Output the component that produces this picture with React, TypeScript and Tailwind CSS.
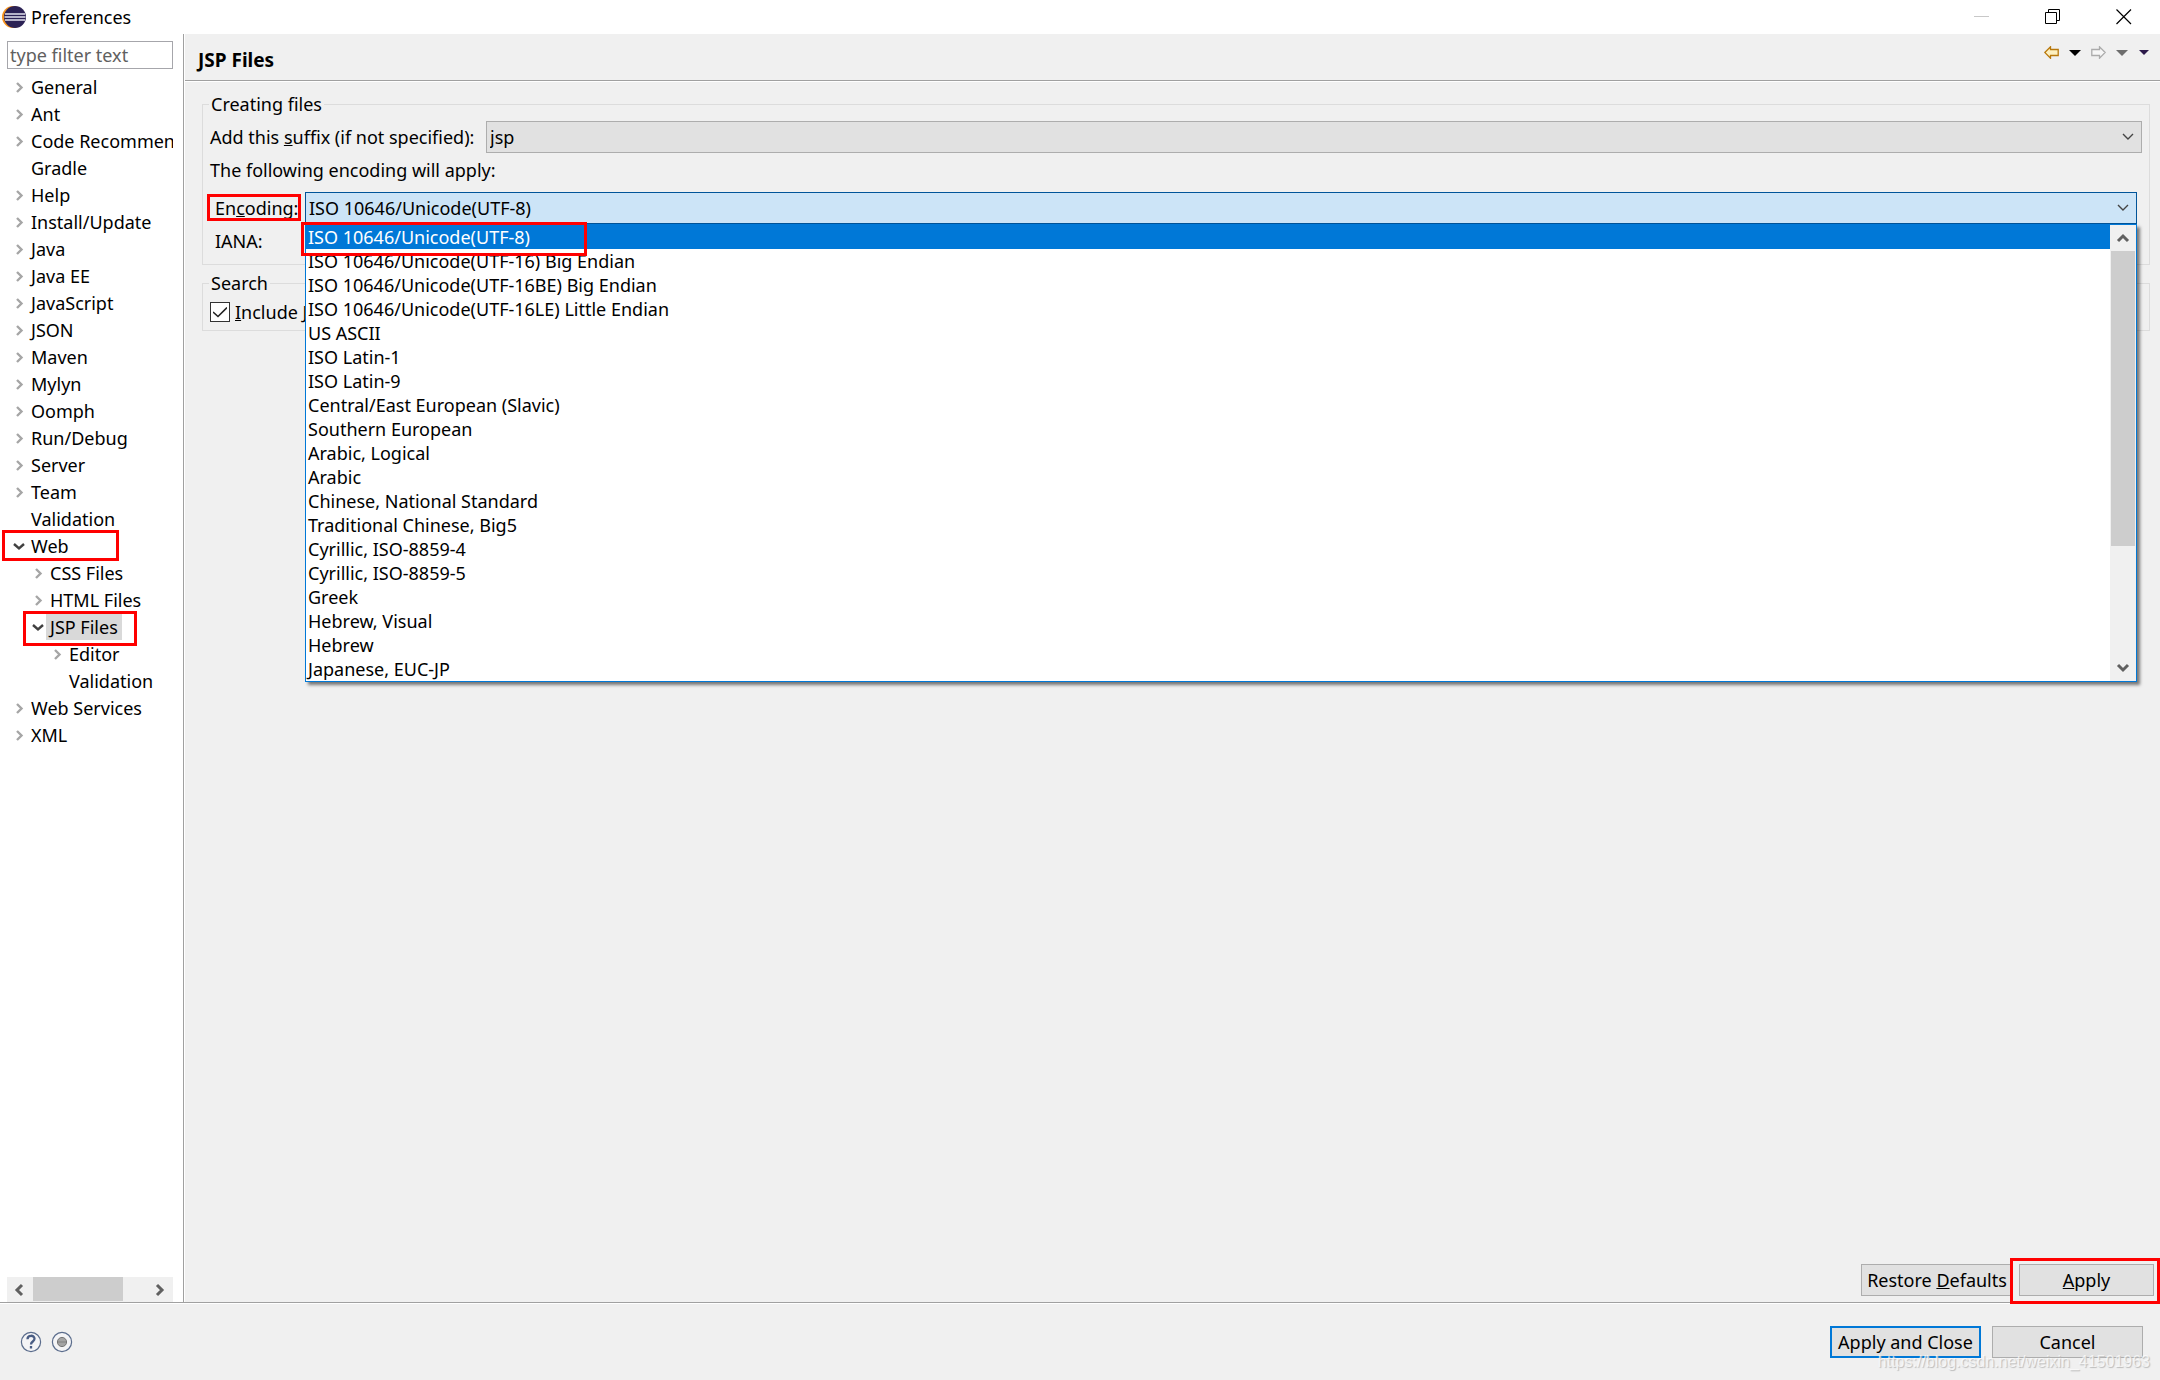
import React from 'react';

type TreeNode = { label: string; level: number; state?: 'open' | 'closed'; selected?: boolean; mark?: string };

const nodes: TreeNode[] = [
  { label: 'General', level: 0, state: 'closed' },
  { label: 'Ant', level: 0, state: 'closed' },
  { label: 'Code Recommenders', level: 0, state: 'closed' },
  { label: 'Gradle', level: 0 },
  { label: 'Help', level: 0, state: 'closed' },
  { label: 'Install/Update', level: 0, state: 'closed' },
  { label: 'Java', level: 0, state: 'closed' },
  { label: 'Java EE', level: 0, state: 'closed' },
  { label: 'JavaScript', level: 0, state: 'closed' },
  { label: 'JSON', level: 0, state: 'closed' },
  { label: 'Maven', level: 0, state: 'closed' },
  { label: 'Mylyn', level: 0, state: 'closed' },
  { label: 'Oomph', level: 0, state: 'closed' },
  { label: 'Run/Debug', level: 0, state: 'closed' },
  { label: 'Server', level: 0, state: 'closed' },
  { label: 'Team', level: 0, state: 'closed' },
  { label: 'Validation', level: 0 },
  { label: 'Web', level: 0, state: 'open', mark: 'left-[2px] -top-[2px] w-[117px] h-[31px]' },
  { label: 'CSS Files', level: 1, state: 'closed' },
  { label: 'HTML Files', level: 1, state: 'closed' },
  { label: 'JSP Files', level: 1, state: 'open', selected: true, mark: 'left-[23px] -top-[2px] w-[114px] h-[35px]' },
  { label: 'Editor', level: 2, state: 'closed' },
  { label: 'Validation', level: 2 },
  { label: 'Web Services', level: 0, state: 'closed' },
  { label: 'XML', level: 0, state: 'closed' },
];

const indents = ['pl-[12px]', 'pl-[31px]', 'pl-[50px]'];

const encodings = [
  'ISO 10646/Unicode(UTF-8)',
  'ISO 10646/Unicode(UTF-16) Big Endian',
  'ISO 10646/Unicode(UTF-16BE) Big Endian',
  'ISO 10646/Unicode(UTF-16LE) Little Endian',
  'US ASCII',
  'ISO Latin-1',
  'ISO Latin-9',
  'Central/East European (Slavic)',
  'Southern European',
  'Arabic, Logical',
  'Arabic',
  'Chinese, National Standard',
  'Traditional Chinese, Big5',
  'Cyrillic, ISO-8859-4',
  'Cyrillic, ISO-8859-5',
  'Greek',
  'Hebrew, Visual',
  'Hebrew',
  'Japanese, EUC-JP',
];

const Mark: React.FC<{ className: string }> = ({ className }) => (
  <span className={`absolute z-20 border-3 border-[#ff0000] pointer-events-none ${className}`} />
);

const Expander: React.FC<{ state?: 'open' | 'closed' }> = ({ state }) => (
  <svg className="w-[14px] h-[14px] shrink-0" viewBox="0 0 14 14" fill="none">
    {state === 'closed' && <path d="M5 3l4.500 4.500L5 12" stroke="#a6a6a6" strokeWidth="2.4" />}
    {state === 'open' && <path d="M2 5l5 4.500L12 5" stroke="#404040" strokeWidth="2.4" />}
  </svg>
);

const ComboArrow: React.FC = () => (
  <svg className="absolute right-[8px] top-[12px] w-[12px] h-[8px] pointer-events-none" viewBox="0 0 12 8" fill="none">
    <path d="M1 1l5 5 5-5" stroke="#444" strokeWidth="1.4" />
  </svg>
);

const ScrollArrow: React.FC<{ d: string }> = ({ d }) => (
  <svg className="w-[14px] h-[14px]" viewBox="0 0 14 14" fill="none">
    <path d={d} stroke="#606060" strokeWidth="3" />
  </svg>
);

const TitleBar: React.FC = () => (
  <header className="flex items-center h-[34px] bg-white pl-[2px] pr-[28px]">
    <svg className="w-[24px] h-[24px]" viewBox="0 0 24 24">
      <circle cx="11" cy="12" r="11" fill="#f7941e" />
      <circle cx="13" cy="12" r="11" fill="#2c2255" />
      <path d="M3 9h20M2.500 12h21M3 15h20" stroke="#e4e4f0" strokeWidth="1.6" />
    </svg>
    <h1 className="ml-[5px]">Preferences</h1>
    <div className="ml-auto flex items-center gap-[55px]">
      <button aria-label="Minimize">
        <svg className="w-[16px] h-[16px]" viewBox="0 0 16 16"><path d="M0 7.500h15" stroke="#c8c8c8" /></svg>
      </button>
      <button aria-label="Restore">
        <svg className="w-[16px] h-[16px]" viewBox="0 0 16 16" fill="none" stroke="#000">
          <path d="M.5 3.500h11v11H.5zM3.500 3.500v-3h11v11h-3" />
        </svg>
      </button>
      <button aria-label="Close">
        <svg className="w-[16px] h-[16px]" viewBox="0 0 16 16" fill="none"><path d="M.5.5l14.500 14.500M15 .5L.5 15" stroke="#000" strokeWidth="1.2" /></svg>
      </button>
    </div>
  </header>
);

const Sidebar: React.FC = () => (
  <nav className="flex flex-col w-[184px] shrink-0 bg-white border-r border-[#a0a0a0]">
    <input
      type="text"
      aria-label="Filter"
      placeholder="type filter text"
      className="mt-[7px] ml-[7px] w-[166px] h-[28px] px-[2px] border border-[#a6a6ab] placeholder:text-[#606060]"
    />
    <ul role="tree" className="mt-[4px]">
      {nodes.map((node, i) => (
        <li key={i} role="treeitem" aria-selected={!!node.selected} className="relative h-[27px]">
          <div className={`flex items-center h-[27px] w-[173px] overflow-hidden ${indents[node.level]}`}>
            <Expander state={node.state} />
            <button className={`ml-px px-1 h-[27px] whitespace-nowrap ${node.selected ? 'bg-[#d9d9d9]' : ''}`}>{node.label}</button>
          </div>
          {node.mark && <Mark className={node.mark} />}
        </li>
      ))}
    </ul>
    <div className="mt-auto ml-[7px] w-[166px] h-[25px] flex items-center bg-[#f0f0f0]">
      <button aria-label="Scroll left" className="w-[26px] flex justify-center"><ScrollArrow d="M9 2L4 7l5 5" /></button>
      <span className="w-[90px] h-[24px] mb-px bg-[#cdcdcd]" />
      <button aria-label="Scroll right" className="ml-auto w-[26px] flex justify-center"><ScrollArrow d="M4 2l5 5-5 5" /></button>
    </div>
  </nav>
);

const PageHeader: React.FC = () => (
  <div className="flex items-start justify-between h-[47px] pl-[13px] pr-[10px] border-b border-[#a0a0a0]">
    <h2 className="mt-[14px] text-[19px] font-bold">JSP Files</h2>
    <div className="mt-[12px] flex items-center gap-[10px]">
      <button aria-label="Back">
        <svg className="w-[15px] h-[13px]" viewBox="0 0 15 13">
          <path d="M.8 6.500L6.500.8v2.700h7.700v6H6.500v2.700z" fill="#fdf0c0" stroke="#b8780c" strokeWidth="1.3" />
        </svg>
      </button>
      <button aria-label="Back history">
        <svg className="w-[12px] h-[6px]" viewBox="0 0 12 6"><path d="M0 0h12L6 6z" fill="#000" /></svg>
      </button>
      <button aria-label="Forward">
        <svg className="w-[15px] h-[13px]" viewBox="0 0 15 13">
          <path d="M14.200 6.500L8.500.8v2.700H.8v6h7.700v2.700z" fill="#f6f6f6" stroke="#ababab" strokeWidth="1.3" />
        </svg>
      </button>
      <button aria-label="Forward history">
        <svg className="w-[12px] h-[6px]" viewBox="0 0 12 6"><path d="M0 0h12L6 6z" fill="#6d6d6d" /></svg>
      </button>
      <button aria-label="View menu">
        <svg className="w-[12px] h-[6px]" viewBox="0 0 12 6"><path d="M1 0h10L6 5z" fill="#2c1a4a" /></svg>
      </button>
    </div>
  </div>
);

const EncodingList: React.FC = () => (
  <div className="absolute z-10 top-full left-0 w-full flex border border-[#0078d7] bg-white shadow-[3px_3px_3px_rgba(0,0,0,0.5)]">
    <ul role="listbox" aria-label="Encodings" className="flex-1">
      {encodings.map((name, i) => (
        <li
          key={name}
          role="option"
          aria-selected={i === 0}
          className={`h-[24px] leading-[24px] pl-[2px] ${i === 0 ? 'bg-[#0078d7] text-white' : ''}`}
        >
          {name}
        </li>
      ))}
    </ul>
    <div className="flex flex-col items-center w-[26px] bg-[#f0f0f0]">
      <button aria-label="Scroll up" className="h-[26px]"><ScrollArrow d="M2 10l5-5 5 5" /></button>
      <span className="w-[24px] h-[295px] bg-[#cdcdcd]" />
      <button aria-label="Scroll down" className="mt-auto h-[27px]"><ScrollArrow d="M2 4l5 5 5-5" /></button>
    </div>
    <Mark className="-left-[5px] -top-[3px] w-[286px] h-[34px]" />
  </div>
);

const App: React.FC = () => {
  const button = 'h-[32px] border border-[#adadad] bg-[#e1e1e1]';

  return (
    <div className="flex flex-col min-h-screen bg-[#f0f0f0] text-black text-[18px] leading-[24px] font-['Noto_Sans','Open_Sans',sans-serif]">
      <TitleBar />
      <div className="flex flex-1 border-b border-[#a0a0a0]">
        <Sidebar />
        <main className="flex flex-col flex-1 min-w-0 border-l border-white">
          <PageHeader />
          <div className="flex flex-col gap-[6px] border-t border-white pt-[10px] pl-[17px] pr-[10px]">
            <fieldset className="min-w-0 h-[173px] border border-[#dcdcdc] pl-[7px] pr-[7px]">
              <legend className="px-[2px] -ml-px">Creating files</legend>
              <div className="flex items-center mt-[5px]">
                <label htmlFor="suffix" className="w-[276px] whitespace-nowrap">Add this <u>s</u>uffix (if not specified):</label>
                <div className="relative flex-1">
                  <select id="suffix" className="appearance-none block w-full h-[32px] pl-[3px] border border-[#adadad] bg-[#e1e1e1]">
                    <option>jsp</option>
                  </select>
                  <ComboArrow />
                </div>
              </div>
              <p className="mt-[5px]">The following encoding will apply:</p>
              <div className="flex items-center mt-[10px] pr-[5px]">
                <label htmlFor="encoding" className="relative w-[95px] pl-[5px]">
                  En<u>c</u>oding:
                  <Mark className="-left-[3px] -top-[2px] w-[94px] h-[27px]" />
                </label>
                <div className="relative flex-1">
                  <select id="encoding" className="appearance-none block w-full h-[32px] pl-[3px] border border-[#005499] bg-[#cce4f7]">
                    {encodings.map((name) => <option key={name}>{name}</option>)}
                  </select>
                  <ComboArrow />
                  <EncodingList />
                </div>
              </div>
              <p className="mt-[5px] pl-[5px]">IANA:</p>
            </fieldset>
            <fieldset className="min-w-0 h-[60px] border border-[#dcdcdc] pl-[7px]">
              <legend className="px-[2px] -ml-px">Search</legend>
              <label className="relative flex items-center gap-[5px] mt-[5px]">
                <input type="checkbox" defaultChecked className="appearance-none w-[20px] h-[20px] border border-[#333] bg-white" />
                <svg className="absolute left-[3px] w-[14px] h-[14px]" viewBox="0 0 14 14" fill="none">
                  <path d="M0 7l5 4.500L14 2.500" stroke="#222" strokeWidth="1.6" />
                </svg>
                <span><u>I</u>nclude JSP</span>
              </label>
            </fieldset>
          </div>
          <div className="mt-auto mb-[6px] pr-[6px] flex justify-end gap-[6px]">
            <button className={`${button} w-[152px] whitespace-nowrap`}>Restore <u>D</u>efaults</button>
            <div className="relative">
              <button className={`${button} w-[135px]`}><u>A</u>pply</button>
              <Mark className="-left-[9px] -top-[6px] w-[150px] h-[46px]" />
            </div>
          </div>
        </main>
      </div>
      <footer className="relative flex items-center h-[77px] pl-[20px] pr-[17px] border-t border-white">
        <div className="flex gap-[9px]">
          <button aria-label="Help">
            <svg className="w-[22px] h-[22px]" viewBox="0 0 22 22" fill="none">
              <circle cx="11" cy="11" r="9.600" fill="#f4f4f6" stroke="#5a6c8c" strokeWidth="1.2" />
              <path d="M7.500 8.200c0-4.600 7-4.400 7-.4 0 2.800-3.500 2.600-3.500 5.700M11 15v2.500" stroke="#4a5d84" strokeWidth="2.300" />
            </svg>
          </button>
          <button aria-label="Record">
            <svg className="w-[22px] h-[22px]" viewBox="0 0 22 22">
              <circle cx="11" cy="11" r="9.600" fill="#f4f4f6" stroke="#5a6c8c" strokeWidth="1.2" />
              <circle cx="11" cy="11" r="4.600" fill="#a4a4a4" stroke="#757575" />
              <path d="M7 11h8" stroke="#808080" />
            </svg>
          </button>
        </div>
        <div className="ml-auto flex gap-[11px]">
          <button className="h-[32px] w-[151px] whitespace-nowrap border-2 border-[#0078d7] bg-[#e1e1e1]">Apply and Close</button>
          <button className={`${button} w-[151px]`}>Cancel</button>
        </div>
        <span className="absolute right-[10px] bottom-[8px] text-[16px] leading-[20px] text-white/70 font-['Liberation_Sans',sans-serif] [text-shadow:1px_1px_1px_#bbb]">
          https://blog.csdn.net/weixin_41501963
        </span>
      </footer>
    </div>
  );
};

export default App;
